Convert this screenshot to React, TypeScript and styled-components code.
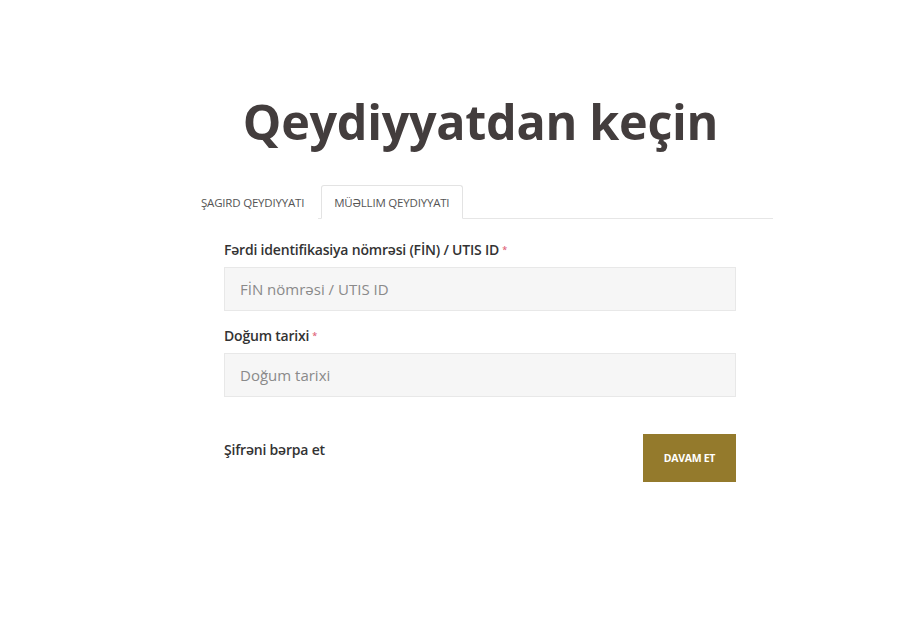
import React from 'react'
import styled, { createGlobalStyle } from 'styled-components'

const GlobalStyle = createGlobalStyle`
  html, body {
    margin: 0;
    padding: 0;
    background: #ffffff;
    font-family: "Open Sans", "Noto Sans", sans-serif;
    color: #333333;
  }
`

const Page = styled.div`
  width: 585px;
  margin-left: 188px;
  padding-top: 86px;
`

const Title = styled.h1`
  margin: 0 0 29px;
  text-align: center;
  font-size: 48.5px;
  line-height: 70px;
  font-weight: 700;
  color: #433d3d;
  letter-spacing: -0.3px;
`

const Tabs = styled.div`
  display: flex;
  border-bottom: 1px solid #e6e6e6;
  height: 33px;
`

const Tab = styled.div<{ $active?: boolean }>`
  display: flex;
  align-items: center;
  padding: 0 13px 0 12px;
  font-size: 11.5px;
  text-transform: uppercase;
  color: #555555;
  letter-spacing: -0.2px;
  margin-bottom: -1px;
  border: 1px solid ${({ $active }) => ($active ? '#e3e3e3' : 'transparent')};
  border-bottom-color: ${({ $active }) => ($active ? '#ffffff' : 'transparent')};
  border-radius: 3px 3px 0 0;
  background: #ffffff;
  margin-left: ${({ $active }) => ($active ? '3px' : '0')};
`

const Form = styled.form`
  padding: 21px 37px 0 36px;
`

const Field = styled.div`
  margin-bottom: 15px;
`

const Label = styled.label`
  display: block;
  font-size: 14px;
  font-weight: 600;
  color: #333333;
  margin-bottom: 8px;
  letter-spacing: -0.2px;
`

const Star = styled.span`
  color: #e0677a;
  font-size: 9px;
  margin-left: 3px;
  vertical-align: 2px;
`

const Input = styled.input`
  display: block;
  box-sizing: border-box;
  width: 100%;
  height: 44px;
  padding: 0 15px;
  font-family: inherit;
  font-size: 15px;
  background: #f6f6f6;
  border: 1px solid #e8e8e8;
  outline: none;
  color: #333333;
  &::placeholder {
    color: #8a8a8a;
  }
`

const Actions = styled.div`
  display: flex;
  justify-content: space-between;
  align-items: flex-start;
  margin-top: 37px;
`

const Link = styled.a`
  font-size: 14px;
  font-weight: 600;
  color: #333333;
  text-decoration: none;
  margin-top: 6px;
  letter-spacing: -0.2px;
`

const Button = styled.button`
  width: 93px;
  height: 48px;
  border: none;
  background: #947a2c;
  color: #ffffff;
  font-family: inherit;
  font-size: 10.5px;
  font-weight: 700;
  letter-spacing: -0.3px;
  cursor: pointer;
`

export default function App() {
  return (
    <>
      <GlobalStyle />
      <Page>
        <Title>Qeydiyyatdan keçin</Title>
        <Tabs>
          <Tab>Şagird qeydiyyatı</Tab>
          <Tab $active>Müəllim qeydiyyatı</Tab>
        </Tabs>
        <Form>
          <Field>
            <Label>
              Fərdi identifikasiya nömrəsi (FİN) / UTIS ID<Star>*</Star>
            </Label>
            <Input placeholder="FİN nömrəsi / UTIS ID" />
          </Field>
          <Field>
            <Label>
              Doğum tarixi<Star>*</Star>
            </Label>
            <Input placeholder="Doğum tarixi" />
          </Field>
          <Actions>
            <Link href="#">Şifrəni bərpa et</Link>
            <Button type="button">DAVAM ET</Button>
          </Actions>
        </Form>
      </Page>
    </>
  )
}
